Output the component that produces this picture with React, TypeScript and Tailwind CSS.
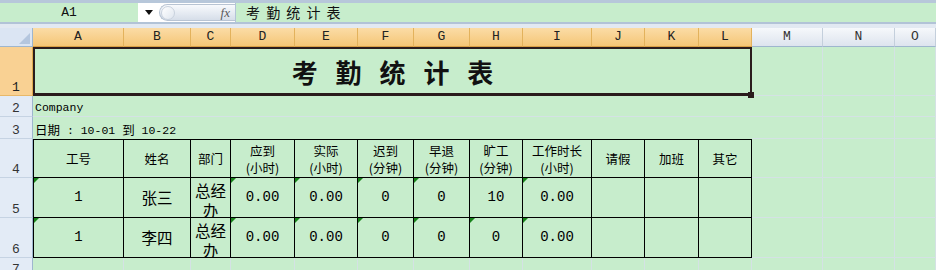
const GRID = "border-r border-b border-[#d4e2e4]";
const CJK = "font-['Noto_Sans_CJK_SC',sans-serif]";

const colHeads = [
  { l: "A", sel: true },
  { l: "B", sel: true },
  { l: "C", sel: true },
  { l: "D", sel: true },
  { l: "E", sel: true },
  { l: "F", sel: true },
  { l: "G", sel: true },
  { l: "H", sel: true },
  { l: "I", sel: true },
  { l: "J", sel: true },
  { l: "K", sel: true },
  { l: "L", sel: true },
  { l: "M", sel: false },
  { l: "N", sel: false },
  { l: "O", sel: false },
];

const heads = [
  ["工号"],
  ["姓名"],
  ["部门"],
  ["应到", "(小时)"],
  ["实际", "(小时)"],
  ["迟到", "(分钟)"],
  ["早退", "(分钟)"],
  ["旷工", "(分钟)"],
  ["工作时长", "(小时)"],
  ["请假"],
  ["加班"],
  ["其它"],
];

const rows = [
  { n: "5", cells: ["1", "张三", "总经办", "0.00", "0.00", "0", "0", "10", "0.00", "", "", ""], marks: [0, 3, 4, 5, 6, 8] },
  { n: "6", cells: ["1", "李四", "总经办", "0.00", "0.00", "0", "0", "0", "0.00", "", "", ""], marks: [0, 3, 4, 5, 6, 7, 8] },
];

const RowHead = ({ n, sel }: { n: string; sel?: boolean }) => (
  <div
    className={
      sel
        ? "flex items-end justify-center overflow-hidden pb-[1px] text-[13px] leading-none text-[#222] bg-[#f9d193] border-r border-b border-r-[#e0a94f] border-b-[#e8b869]"
        : "flex items-end justify-center overflow-hidden pb-[1px] text-[13px] leading-none text-[#333] bg-[#e3ebf6] border-r border-b border-r-[#9eb6ce] border-b-[#c6d3e3]"
    }
  >
    {n}
  </div>
);

const Empty = ({ count }: { count: number }) => (
  <>
    {Array.from({ length: count }).map((_, i) => (
      <div key={i} className={GRID} />
    ))}
  </>
);

const FormulaBar = () => (
  <div className="flex shrink-0 h-[24px] border-t-[3px] border-t-[#b7c7da] border-b-2 border-b-[#b2c3d7] bg-[#c7edcc]">
    <div className="w-[138px] flex items-center justify-center text-[13px] text-[#111]">A1</div>
    <div className="w-[97px] flex items-center bg-white">
      <div className="w-[21px] flex justify-center">
        <svg width="8" height="5" viewBox="0 0 8 5">
          <path d="M0 0 H8 L4 5 Z" fill="#111" />
        </svg>
      </div>
      <div className="flex-1 h-[17px] rounded-l-full border border-r-0 border-[#b8c4d3] bg-linear-to-b from-[#f8fafd] to-[#d6dee9] flex items-center justify-between pl-[1px] pr-[5px]">
        <div className="w-[14px] h-[14px] rounded-full border border-[#c9d2de] bg-linear-to-br from-white to-[#dfe6ef]" />
        <span className="font-['Liberation_Serif',serif] italic text-[13px] text-[#5a5a5a]">fx</span>
      </div>
    </div>
    <div className={`flex-1 flex items-center pl-[10px] border-l border-[#b2c3d7] text-[14px] tracking-[1.5px] text-[#111] ${CJK}`}>
      考 勤 统 计 表
    </div>
  </div>
);

const Sheet = () => (
  <div className="grid flex-1 min-h-0 overflow-hidden grid-cols-[33px_91px_67px_40px_64px_63px_56px_56px_53px_69px_53px_54px_53px_71px_72px_1fr] grid-rows-[19px_49px_21px_22px_39px_40px_40px_20px]">
    {/* header row */}
    <div className="flex items-end justify-end bg-[#dbe5f3] border-r border-b border-[#9eb6ce] p-[2px]">
      <svg width="11" height="11" viewBox="0 0 11 11">
        <path d="M11 0 V11 H0 Z" fill="#b4c6de" />
      </svg>
    </div>
    {colHeads.map((c) => (
      <div
        key={c.l}
        className={
          c.sel
            ? "flex items-center justify-center text-[13px] text-[#222] bg-linear-to-b from-[#fbdca6] to-[#f5c676] border-r border-b border-r-[#e3b25c] border-b-[#d99f45]"
            : "flex items-center justify-center text-[13px] text-[#333] bg-linear-to-b from-[#f6f8fb] to-[#dde4ee] border-r border-b border-r-[#c4cfdc] border-b-[#9eb6ce]"
        }
      >
        {c.l}
      </div>
    ))}

    {/* row 1 */}
    <RowHead n="1" sel />
    <div className="col-span-12 relative flex items-center justify-center border-t-2 border-l-2 border-r-2 border-b-[3px] border-[#2a1c1c]">
      <span className={`text-[26px] font-bold tracking-[6px] pl-[6px] text-[#111] ${CJK}`}>考 勤 统 计 表</span>
      <div className="absolute -right-[4px] -bottom-[5px] w-[6px] h-[6px] bg-[#2a1c1c]" />
    </div>
    <Empty count={3} />

    {/* row 2 */}
    <RowHead n="2" />
    <div className="col-span-12 flex items-end pl-[2px] pb-[3px] text-[11.5px] leading-none border-b border-[#d4e2e4]">Company</div>
    <Empty count={3} />

    {/* row 3 */}
    <RowHead n="3" />
    <div className="col-span-12 flex items-end pl-[2px] pb-[3px] text-[11.5px] leading-none whitespace-pre">
      <span className={`text-[12.5px] ${CJK}`}>日期</span> : 10-01 <span className={`text-[12.5px] ${CJK}`}>到</span> 10-22
    </div>
    <Empty count={3} />

    {/* row 4 header of table */}
    <RowHead n="4" />
    {heads.map((h, i) => (
      <div
        key={i}
        className={
          i === 0
            ? `flex flex-col items-center justify-center text-[12.5px] leading-[17px] border border-black ${CJK}`
            : `flex flex-col items-center justify-center text-[12.5px] leading-[17px] border-t border-r border-b border-black ${CJK}`
        }
      >
        {h.map((t) => (
          <span key={t}>{t}</span>
        ))}
      </div>
    ))}
    <Empty count={3} />

    {/* rows 5, 6 */}
    {rows.map((r) => (
      <>
        <RowHead key={r.n} n={r.n} />
        {r.cells.map((v, i) => (
          <div
            key={r.n + i}
            className={
              i === 0
                ? "relative flex items-center justify-center border-l border-r border-b border-black text-[14px]"
                : i === 1
                ? `relative flex items-center justify-center border-r border-b border-black text-[15.5px] ${CJK}`
                : i === 2
                ? `relative overflow-hidden flex justify-center text-center pt-[2px] border-r border-b border-black text-[15.5px] leading-[20px] ${CJK}`
                : "relative flex items-center justify-center border-r border-b border-black text-[14px]"
            }
          >
            {r.marks.includes(i) && (
              <div className="absolute top-0 left-0 w-0 h-0 border-t-[5px] border-r-[5px] border-t-[#17841a] border-r-transparent" />
            )}
            {v}
          </div>
        ))}
        <Empty count={3} />
      </>
    ))}

    {/* row 7 */}
    <RowHead n="7" />
    <Empty count={15} />
  </div>
);

export default function App() {
  return (
    <div className="w-[936px] h-[270px] overflow-hidden bg-[#c7edcc] flex flex-col font-['Liberation_Mono','Noto_Sans_CJK_SC',monospace] text-black">
      <FormulaBar />
      <div className="h-[4px] shrink-0 bg-[#e2e9f2]" />
      <Sheet />
    </div>
  );
}
